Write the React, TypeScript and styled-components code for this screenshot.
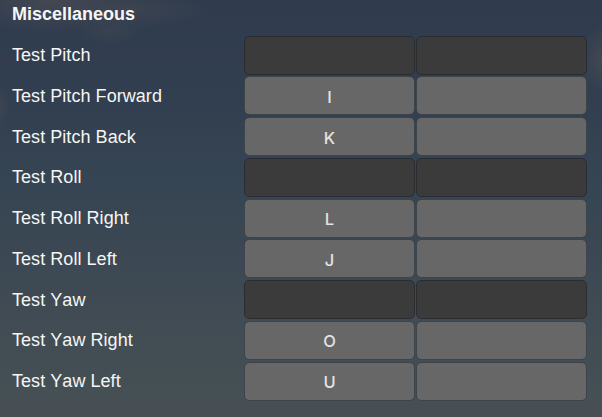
import React from "react";
import styled, { createGlobalStyle } from "styled-components";

const GlobalStyle = createGlobalStyle`
  *, *::before, *::after { box-sizing: border-box; }
  body { margin: 0; overflow: hidden; }
`;

const Panel = styled.main`
  width: 602px;
  height: 417px;
  overflow: hidden;
  color: #f6f6f4;
  font-family: "Liberation Sans", Arial, sans-serif;
  font-size: 18px;
  background:
    radial-gradient(ellipse 90px 30px at 50px 2px, rgba(76, 76, 84, 0.7), transparent),
    radial-gradient(ellipse 75px 18px at 130px 10px, rgba(72, 74, 82, 0.5), transparent),
    radial-gradient(ellipse 32px 14px at 110px 30px, rgba(72, 76, 84, 0.35), transparent),
    radial-gradient(ellipse 10px 22px at 0 108px, rgba(76, 78, 84, 0.4), transparent),
    radial-gradient(ellipse 22px 34px at 602px 60px, rgba(78, 78, 86, 0.6), transparent),
    linear-gradient(#303c4e 0, #323f50 25%, #364553 45%, #3f4a53 72%, #455055 94%, #484e54 100%);
`;

const Heading = styled.h2`
  height: 35.6px;
  margin: 0;
  padding-left: 12px;
  font-size: 18px;
  font-weight: 700;
  line-height: 29px;
`;

const Row = styled.div`
  display: grid;
  grid-template-columns: 233px 171px 171px;
  column-gap: 1px;
  height: 40.75px;
  padding-left: 10px;
`;

const Label = styled.span`
  padding: 0.45px 0 0 2px;
  line-height: 39.8px;
  letter-spacing: 0.05px;
  white-space: nowrap;
`;

const Axis = styled.span`
  font-kerning: none;
`;

const Binding = styled.div<{ $locked: boolean }>`
  display: flex;
  align-items: center;
  justify-content: center;
  height: 39px;
  padding-top: 2px;
  border: 1px solid ${(p) => (p.$locked ? "#292d32" : "#3d444a")};
  border-radius: 5px;
  background: ${(p) => (p.$locked ? "#3b3b3b" : "#676767")};
  background-clip: padding-box;
  color: #e3e3e3;
  font-family: Inter, sans-serif;
  font-size: 16.5px;
  font-weight: 500;
`;

const actions: { axis: string; direction?: string; input?: string }[] = [
  { axis: "Pitch" },
  { axis: "Pitch", direction: "Forward", input: "I" },
  { axis: "Pitch", direction: "Back", input: "K" },
  { axis: "Roll" },
  { axis: "Roll", direction: "Right", input: "L" },
  { axis: "Roll", direction: "Left", input: "J" },
  { axis: "Yaw" },
  { axis: "Yaw", direction: "Right", input: "O" },
  { axis: "Yaw", direction: "Left", input: "U" },
];

export default function App() {
  return (
    <>
      <GlobalStyle />
      <Panel>
        <Heading>Miscellaneous</Heading>
        {actions.map(({ axis, direction, input }) => (
          <Row key={axis + (direction ?? "")}>
            <Label>
              Test <Axis>{axis}</Axis>
              {direction && ` ${direction}`}
            </Label>
            <Binding $locked={!input}>{input}</Binding>
            <Binding $locked={!input} />
          </Row>
        ))}
      </Panel>
    </>
  );
}
